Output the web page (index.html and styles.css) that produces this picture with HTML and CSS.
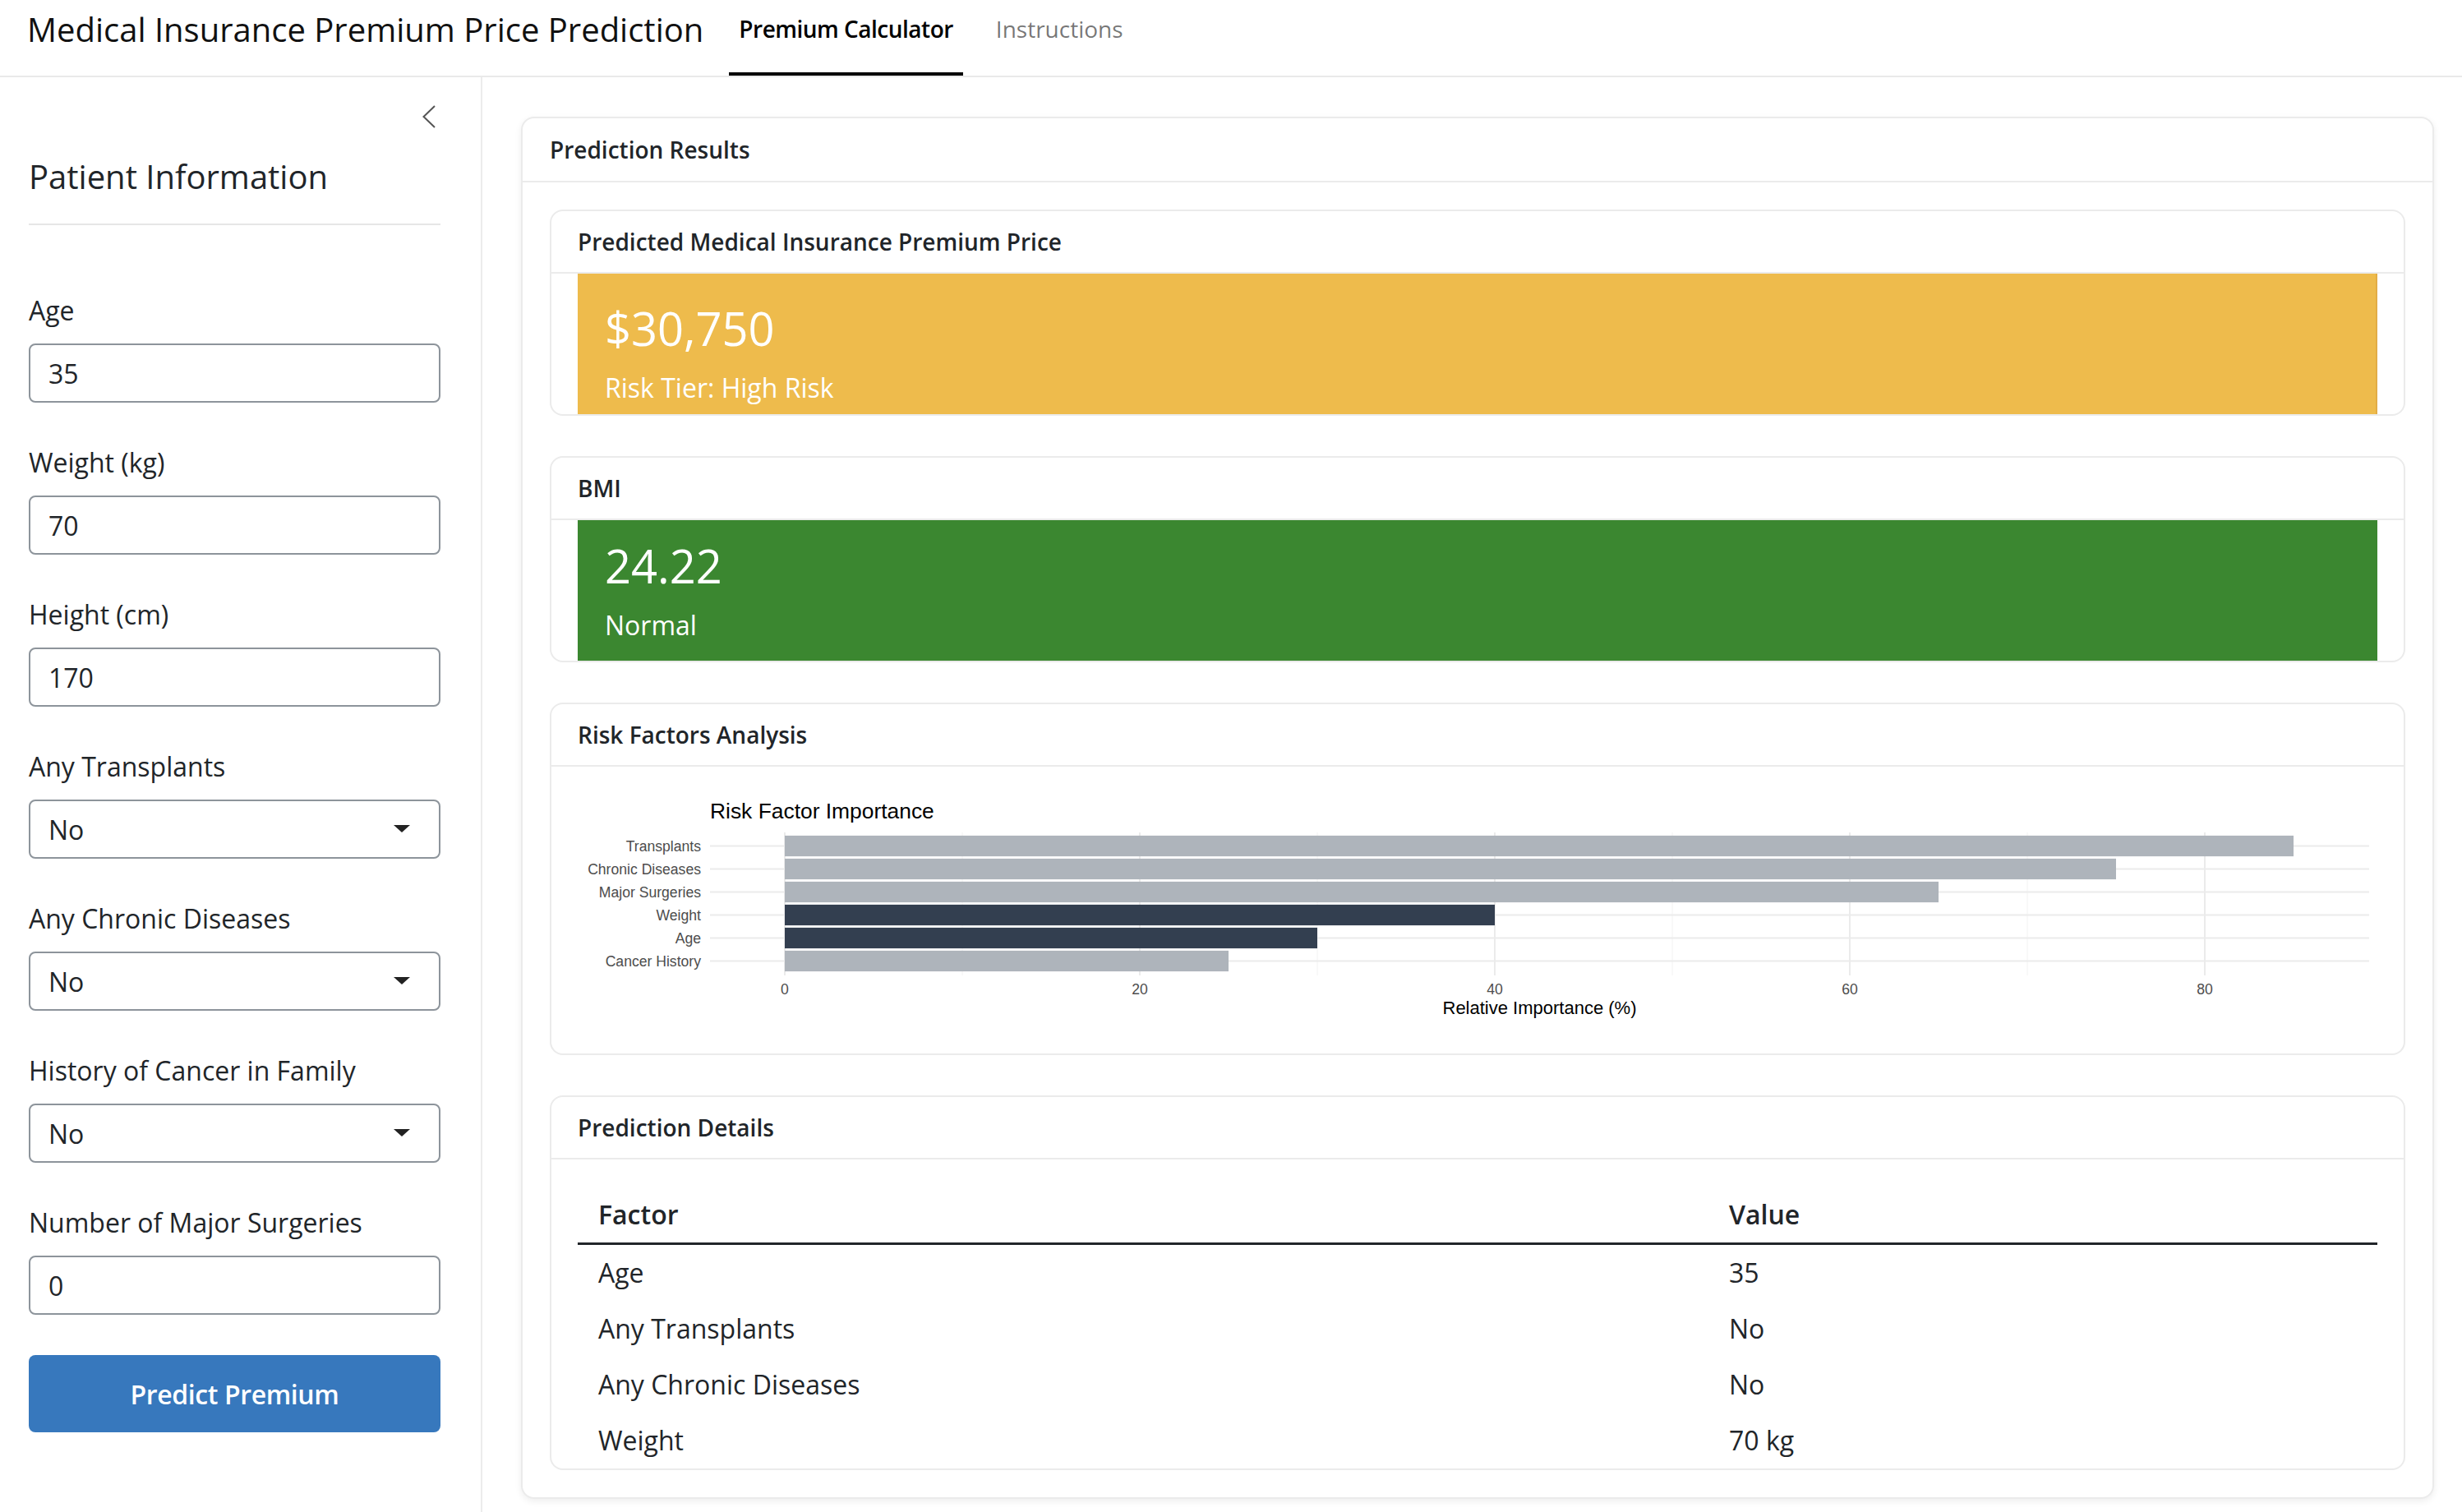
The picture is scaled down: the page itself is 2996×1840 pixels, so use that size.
FILE: index.html
```html
<!DOCTYPE html>
<html lang="en">
<head>
<meta charset="utf-8">
<title>Medical Insurance Premium Price Prediction</title>
<link rel="stylesheet" href="styles.css">
</head>
<body>
<header class="navbar">
  <div class="brand">Medical Insurance Premium Price Prediction</div>
  <nav class="tabs">
    <a class="tab active">Premium Calculator</a>
    <a class="tab">Instructions</a>
  </nav>
</header>
<div class="layout">
  <aside class="sidebar">
    <div class="collapse-row">
      <svg class="chev" width="16" height="28" viewBox="0 0 16 28"><polyline points="15,1 1.5,14 15,27" fill="none" stroke="#555" stroke-width="2"/></svg>
    </div>
    <h2 class="side-title">Patient Information</h2>
    <hr class="side-rule">
    <div class="field">
      <label class="field-label">Age</label>
      <input class="control" type="text" value="35">
    </div>
    <div class="field">
      <label class="field-label">Weight (kg)</label>
      <input class="control" type="text" value="70">
    </div>
    <div class="field">
      <label class="field-label">Height (cm)</label>
      <input class="control" type="text" value="170">
    </div>
    <div class="field">
      <label class="field-label">Any Transplants</label>
      <div class="control select"><span>No</span><svg width="20" height="10" viewBox="0 0 20 10"><polygon points="0,0 20,0 10,9" fill="#222"/></svg></div>
    </div>
    <div class="field">
      <label class="field-label">Any Chronic Diseases</label>
      <div class="control select"><span>No</span><svg width="20" height="10" viewBox="0 0 20 10"><polygon points="0,0 20,0 10,9" fill="#222"/></svg></div>
    </div>
    <div class="field">
      <label class="field-label">History of Cancer in Family</label>
      <div class="control select"><span>No</span><svg width="20" height="10" viewBox="0 0 20 10"><polygon points="0,0 20,0 10,9" fill="#222"/></svg></div>
    </div>
    <div class="field">
      <label class="field-label">Number of Major Surgeries</label>
      <input class="control" type="text" value="0">
    </div>
    <button class="btn-primary">Predict Premium</button>
  </aside>
  <main class="main">
    <section class="card outer">
      <div class="card-header">Prediction Results</div>
      <div class="card-body outer-body">
        <section class="card inner">
          <div class="card-header">Predicted Medical Insurance Premium Price</div>
          <div class="vb-wrap">
            <div class="value-box vb-warning">
              <div class="vb-value">$30,750</div>
              <div class="vb-sub">Risk Tier: High Risk</div>
            </div>
          </div>
        </section>
        <section class="card inner">
          <div class="card-header">BMI</div>
          <div class="vb-wrap">
            <div class="value-box vb-success">
              <div class="vb-value">24.22</div>
              <div class="vb-sub">Normal</div>
            </div>
          </div>
        </section>
        <section class="card inner">
          <div class="card-header">Risk Factors Analysis</div>
          <div class="chart-body">
            <svg class="chart" width="2190" height="300" viewBox="0 0 2190 300">
              <text x="161" y="47" class="c-title">Risk Factor Importance</text>
              <g class="grid-minor">
                <line x1="468" y1="64" x2="468" y2="238"/>
                <line x1="900" y1="64" x2="900" y2="238"/>
                <line x1="1332" y1="64" x2="1332" y2="238"/>
                <line x1="1764" y1="64" x2="1764" y2="238"/>
              </g>
              <g class="grid-major">
                <line x1="252" y1="64" x2="252" y2="238"/>
                <line x1="684" y1="64" x2="684" y2="238"/>
                <line x1="1116" y1="64" x2="1116" y2="238"/>
                <line x1="1548" y1="64" x2="1548" y2="238"/>
                <line x1="1980" y1="64" x2="1980" y2="238"/>
                <line x1="161" y1="80.5" x2="2180" y2="80.5"/>
                <line x1="161" y1="108.5" x2="2180" y2="108.5"/>
                <line x1="161" y1="136.5" x2="2180" y2="136.5"/>
                <line x1="161" y1="164.5" x2="2180" y2="164.5"/>
                <line x1="161" y1="192.5" x2="2180" y2="192.5"/>
                <line x1="161" y1="220.5" x2="2180" y2="220.5"/>
              </g>
              <rect class="bar-light" x="252" y="67.9" width="1836" height="25.2"/>
              <rect class="bar-light" x="252" y="95.9" width="1620" height="25.2"/>
              <rect class="bar-light" x="252" y="123.9" width="1404" height="25.2"/>
              <rect class="bar-dark" x="252" y="151.9" width="864" height="25.2"/>
              <rect class="bar-dark" x="252" y="179.9" width="648" height="25.2"/>
              <rect class="bar-light" x="252" y="207.9" width="540" height="25.2"/>
              <g class="c-ylab">
                <text x="150" y="86.5">Transplants</text>
                <text x="150" y="114.5">Chronic Diseases</text>
                <text x="150" y="142.5">Major Surgeries</text>
                <text x="150" y="170.5">Weight</text>
                <text x="150" y="198.5">Age</text>
                <text x="150" y="226.5">Cancer History</text>
              </g>
              <g class="c-xlab">
                <text x="252" y="261">0</text>
                <text x="684" y="261">20</text>
                <text x="1116" y="261">40</text>
                <text x="1548" y="261">60</text>
                <text x="1980" y="261">80</text>
              </g>
              <text x="1170.5" y="285" class="c-axis">Relative Importance (%)</text>
            </svg>
          </div>
        </section>
        <section class="card inner">
          <div class="card-header">Prediction Details</div>
          <div class="table-body">
            <table class="details">
              <thead>
                <tr><th class="col-factor">Factor</th><th>Value</th></tr>
              </thead>
              <tbody>
                <tr><td>Age</td><td>35</td></tr>
                <tr><td>Any Transplants</td><td>No</td></tr>
                <tr><td>Any Chronic Diseases</td><td>No</td></tr>
                <tr><td>Weight</td><td>70 kg</td></tr>
              </tbody>
            </table>
          </div>
        </section>
      </div>
    </section>
  </main>
</div>
</body>
</html>
```
FILE: styles.css
```css
* { box-sizing: border-box; }
html, body {
  margin: 0;
  padding: 0;
  width: 2996px;
  height: 1840px;
  overflow: hidden;
  background: #fff;
  font-family: "Open Sans", "Liberation Sans", sans-serif;
  color: #212529;
}

/* ---------- navbar ---------- */
.navbar {
  display: flex;
  align-items: stretch;
  height: 94px;
  border-bottom: 2px solid #e9e9e9;
  padding-left: 33px;
}
.brand {
  font-size: 40px;
  line-height: 48px;
  padding-top: 12px;
  color: #111;
  margin-right: 31px;
  white-space: nowrap;
}
.tabs {
  display: flex;
  gap: 28px;
}
.tab {
  display: block;
  font-size: 28px;
  line-height: 42px;
  font-weight: 400;
  padding: 14px 12px 0;
  height: 92px;
  color: rgba(0, 0, 0, 0.55);
  border-bottom: 4px solid transparent;
  white-space: nowrap;
}
.tab.active {
  color: #000;
  font-weight: 600;
  letter-spacing: -0.5px;
  border-bottom-color: #000;
}

/* ---------- layout ---------- */
.layout {
  display: flex;
  height: 1746px;
}
.sidebar {
  width: 587px;
  flex: none;
  border-right: 2px solid #ececec;
  padding: 34px 49px 0 35px;
}
.collapse-row {
  display: flex;
  justify-content: flex-end;
  padding-right: 6px;
  height: 28px;
  margin-bottom: 35px;
}
.side-title {
  margin: 0;
  font-size: 40px;
  line-height: 48px;
  font-weight: 400;
  color: #212529;
}
.side-rule {
  margin: 33px 0 80px;
  border: 0;
  border-top: 2px solid #e6e6e6;
  height: 0;
}
.field {
  margin-bottom: 49px;
}
.field-label {
  display: block;
  font-size: 32px;
  line-height: 48px;
  margin-bottom: 16px;
  color: #212529;
}
.control {
  display: block;
  width: 100%;
  height: 72px;
  border: 2px solid #8d949b;
  border-radius: 8px;
  padding: 0 22px;
  font-family: inherit;
  font-size: 32px;
  color: #212529;
  background: #fff;
  outline: none;
}
.select {
  display: flex;
  align-items: center;
  justify-content: space-between;
  padding-right: 35px;
}
.btn-primary {
  display: block;
  width: 100%;
  height: 94px;
  border: 0;
  border-radius: 8px;
  background: #3778bd;
  color: #fff;
  font-family: inherit;
  font-size: 32px;
  font-weight: 600;
  letter-spacing: -0.4px;
}

/* ---------- main ---------- */
.main {
  flex: 1;
  padding: 48px 34px 0 47px;
}
.card {
  background: #fff;
  border: 2px solid #ebebeb;
  border-radius: 16px;
}
.outer {
  width: 2328px;
  box-shadow: 0 3px 8px rgba(0, 0, 0, 0.07);
}
.card-header {
  font-size: 28px;
  line-height: 42px;
  font-weight: 600;
  padding: 17px 33px;
  border-bottom: 2px solid #ebebeb;
  color: #212529;
}
.inner .card-header {
  padding: 16px 32px;
}
.outer-body {
  padding: 33px;
  display: flex;
  flex-direction: column;
  gap: 49px;
}
.inner {
  overflow: hidden;
}
.vb-wrap {
  padding: 0 32px;
}
.value-box {
  height: 171px;
  padding: 33px 33px 0;
  color: #fff;
}
.vb-warning { background: #eebb4c; border-right: 2px solid #e2ad45; }
.vb-success { background: #3b8730; padding-top: 22px; }
.vb-value {
  font-size: 56px;
  line-height: 67px;
}
.vb-sub {
  margin-top: 15px;
  font-size: 32px;
  line-height: 48px;
}

/* ---------- chart ---------- */
.chart-body {
  padding: 16px 32px 33px;
}
.chart {
  display: block;
  font-family: "Liberation Sans", Arial, sans-serif;
}
.c-title { font-size: 26.4px; fill: #000; }
.grid-major line { stroke: #ebebeb; stroke-width: 2; }
.grid-minor line { stroke: #f2f2f2; stroke-width: 1; }
.bar-light { fill: #aeb4bb; }
.bar-dark { fill: #333f50; }
.c-ylab text { font-size: 17.6px; fill: #4d4d4d; text-anchor: end; }
.c-xlab text { font-size: 17.6px; fill: #4d4d4d; text-anchor: middle; }
.c-axis { font-size: 22px; fill: #000; text-anchor: middle; }

/* ---------- table ---------- */
.table-body {
  padding: 33px 32px 0;
}
.details {
  width: 100%;
  border-collapse: collapse;
  font-size: 32px;
  line-height: 48px;
  color: #212529;
}
.details th {
  text-align: left;
  font-weight: 600;
  padding: 10px 25px;
  border-bottom: 3px solid #212529;
}
.details td {
  padding: 10px 25px;
}
.col-factor { width: 1376px; }
```
